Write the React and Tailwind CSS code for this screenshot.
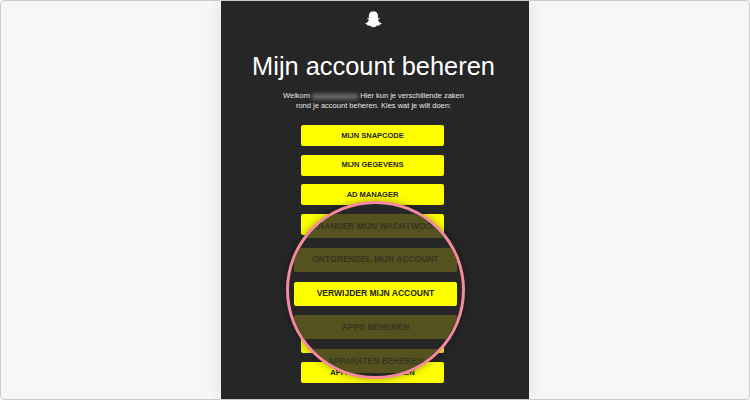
const font = "font-['Liberation_Sans',Arial,sans-serif]";

const buttons = [
  "MIJN SNAPCODE",
  "MIJN GEGEVENS",
  "AD MANAGER",
  "WIJZIG MIJN WACHTWOORD",
  "ONTGRENDEL MIJN ACCOUNT",
  "VERWIJDER MIJN ACCOUNT",
  "APPS BEHEREN",
  "APPARATEN BEHEREN",
  "APPARATEN BEHEREN",
];

const lensButtons = [
  { label: "VERANDER MIJN WACHTWOORD" },
  { label: "ONTGRENDEL MIJN ACCOUNT" },
  { label: "VERWIJDER MIJN ACCOUNT", active: true },
  { label: "APPS BEHEREN" },
  { label: "APPARATEN BEHEREN" },
];

function Ghost() {
  return (
    <svg viewBox="0 0 24 24" className="w-[19px] h-[19px]" fill="#fff">
      <path d="M12 1.5c-3.6 0-5.9 2.6-5.9 6 0 .9 0 1.9.1 2.7-.6.2-1.5-.3-1.9 0-.5.4-.1 1 .4 1.3.5.2 1.3.5 1.3 1-.4 1.8-2 3.7-4 4.2-.6.2-.6.7-.1 1 .6.3 1.4.4 2 .6.4.4.2 1.1.6 1.3.7.2 1.5-.2 2.5 0 1.2.3 2.3 2.1 4.9 2.1s3.7-1.8 4.9-2.1c1-.2 1.8.2 2.5 0 .4-.2.2-.9.6-1.3.6-.2 1.4-.3 2-.6.5-.3.5-.8-.1-1-2-.5-3.6-2.4-4-4.2 0-.5.8-.8 1.3-1 .5-.3.9-.9.4-1.3-.4-.3-1.3.2-1.9 0 .1-.8.1-1.8.1-2.7 0-3.4-2.3-6-5.9-6z" />
    </svg>
  );
}

export default function App() {
  return (
    <div className={`relative w-[750px] h-[400px] overflow-hidden bg-[#f7f7f7] border border-[#cccccc] rounded-[4px] flex justify-center ${font}`}>
      <div className="w-[308px] h-full pr-[3px] bg-[#262626] flex flex-col items-center shadow-[0_0_18px_rgba(0,0,0,0.1)]">
        <div className="mt-[9px] h-[19px]">
          <Ghost />
        </div>
        <h1 className="mt-[22px] text-[25.4px] leading-[30px] text-white font-normal whitespace-nowrap">Mijn account beheren</h1>
        <p className="mt-[10px] text-[7.5px] leading-[10px] text-[#e6e6e6] text-center whitespace-nowrap">
          Welkom <span className="inline-block w-[46px] h-[5px] bg-[#757575] blur-[2px] align-middle" /> Hier kun je verschillende zaken
          <br />
          rond je account beheren. Kies wat je wilt doen:
        </p>
        <div className="mt-[14px] mr-[2px] flex flex-col gap-[8.6px]">
          {buttons.map((label, i) => (
            <div
              key={i}
              className="shrink-0 w-[143px] h-[21px] rounded-[2px] bg-[#ffff00] text-[#262626] font-bold text-[7.5px] flex items-center justify-center whitespace-nowrap"
            >
              {label}
            </div>
          ))}
        </div>
      </div>

      {/* magnifier lens over the button list */}
      <div className="absolute left-[285px] top-[200px] w-[179px] h-[178px] rounded-full border-[3px] border-[#f58a9f] bg-[#262626] overflow-hidden shadow-[0_0_8px_rgba(0,0,0,0.35)] flex flex-col items-center gap-[9.75px] pt-[10px]">
        {lensButtons.map((b) => (
          <div
            key={b.label}
            className={`shrink-0 w-[163px] h-[24px] rounded-[2px] font-bold text-[8.5px] flex items-center justify-center whitespace-nowrap ${
              b.active ? "bg-[#ffff00] text-[#262626]" : "bg-[#55521f] text-[#36361f]"
            }`}
          >
            {b.label}
          </div>
        ))}
      </div>
    </div>
  );
}
